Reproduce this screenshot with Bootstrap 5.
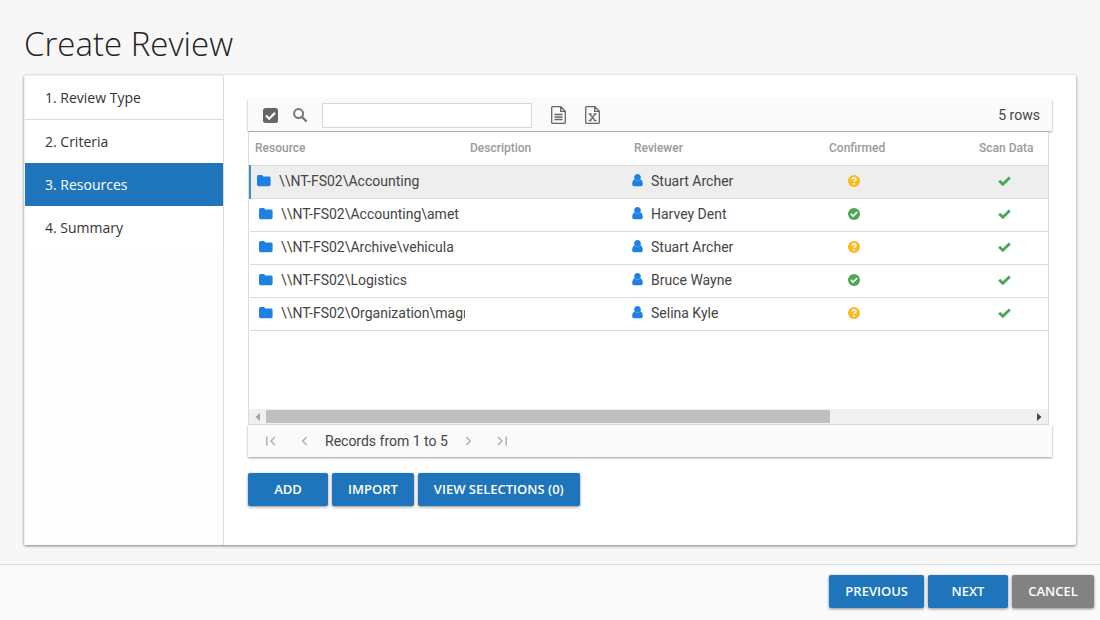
<!DOCTYPE html>
<html lang="en">
<head>
<meta charset="utf-8">
<meta name="viewport" content="width=device-width, initial-scale=1">
<title>Create Review</title>
<link href="https://cdn.jsdelivr.net/npm/bootstrap@5.3.0/dist/css/bootstrap.min.css" rel="stylesheet">
<style>
  :root { --brand: #1e75bb; --line: #dcdcdc; }
  body { background: #f7f7f7; color: #444; font: 14px/20px Roboto, "Liberation Sans", sans-serif; }
  .segoe { font-family: "Open Sans", "Noto Sans", sans-serif; }
  .page-title { font-size: 33px; line-height: 44px; font-weight: 350; color: #222; padding-top: 22px; margin-bottom: 9px; }
  .panel { background: #fff; border-radius: 2px; box-shadow: 0 1px 3px rgba(0,0,0,.5); margin-bottom: 19px; }
  .steps { width: 200px; background: #fdfdfd; border: 1px solid var(--line); border-width: 1px 1px 0 1px; border-top-color: #eee; border-left-color: #eee; }
  .steps .nav-link { height: 43px; padding: 0 20px; line-height: 43px; color: #333; font-size: 14px; border-radius: 0; background: #fff; box-sizing: content-box; }
  .steps .ruled { border-bottom: 1px solid var(--line); }
  .steps .nav-link.active { background: var(--brand); color: #fff; }
  .bar { background: #fafafa; height: 32px; box-shadow: 0 1px 2px rgba(0,0,0,.4); }
  .tools { gap: 15px; padding: 0 12px 0 15px; }
  .exports { gap: 19px; margin-left: 4px; }
  .pager { padding-left: 18px; gap: 26px; }
  .pager-text { margin: 0 -8px; }
  .icon-btn { border: 0; background: none; padding: 0; color: #666; line-height: 0; }
  .search { width: 210px; height: 25px; border: 1px solid #d8d8d8; border-radius: 0; padding: 0 6px; font-size: 14px; }
  .grid { height: 294px; margin-right: 3px; border: 1px solid var(--line); border-top-color: #aaa; background: #fff; }
  .grid table { table-layout: fixed; width: 100%; color: inherit; }
  .grid th { height: 33px; padding: 0 0 0 5px; font-size: 12px; font-weight: 500; color: #9a9a9a; }
  .grid td { height: 33px; padding: 0 0 2px 9px; overflow: hidden; white-space: nowrap; border-top: 1px solid var(--line); }
  .grid td:nth-child(3) { padding-left: 3px; }
  .grid td:nth-child(4), .grid td:nth-child(5) { padding-left: 24px; }
  .grid tbody tr:last-child td { border-bottom: 1px solid var(--line); }
  .grid tr.chosen td { background: #eee; }
  .grid tr.chosen td:first-child { border-left: 2px solid #3b93b5; padding-left: 6px; }
  .grid svg { display: inline-block; vertical-align: -1px; }
  .c-res { width: 215px; } .c-desc { width: 164px; } .c-rev { width: 195px; } .c-conf { width: 150px; }
  .blue { color: #1e80e2; } .green { color: #4aa855; } .amber { color: #fdb81e; }
  .scroller { height: 15px; background: #f0f0f0; }
  .thumb { height: 13px; background: #bfbfbf; }
  .scroller button { width: 17px; }
  .pager .icon-btn { color: #b4b4b4; }
  .act { background: var(--brand); color: #fff; border: 0; border-radius: 2px; font-size: 13px; line-height: 21px; padding: 6px 16px; font-weight: 600; min-width: 80px; box-shadow: 0 1px 3px rgba(0,0,0,.45); }
  .act:hover { background: #17639f; color: #fff; }
  .act.grey { background: #828282; min-width: 82px; }
  .foot { background: #fafafa; border-top: 1px solid var(--line); padding: 10px 6px 12px; }
</style>
</head>
<body class="d-flex flex-column min-vh-100">
<svg class="d-none" aria-hidden="true">
  <symbol id="folder" viewBox="0 0 14 12"><path fill="currentColor" d="M1.500 0h3.200Q6 0 6.200 1.600h6.100Q13.600 1.700 13.600 3v6.600Q13.600 11.200 12 11.200H1.600Q0 11.200 0 9.600V1.600Q0 0 1.500 0z"/></symbol>
  <symbol id="person" viewBox="0 0 11 13"><path fill="currentColor" d="M5.500 0a3.200 3.300 0 0 1 2.700 5.200Q10.800 6 10.800 10.200 10.800 12.300 9 12.300H2Q.2 12.300.2 10.200.2 6 2.800 5.200A3.200 3.300 0 0 1 5.500 0z"/><path d="M2.700 5.700q2.800 2.200 5.600 0" fill="none" stroke="#fff" stroke-opacity=".35" stroke-width=".7"/></symbol>
  <symbol id="ask" viewBox="0 0 12 12"><circle cx="6" cy="6" r="6" fill="currentColor"/><path d="M4.100 4.500C4.300 2.500 8 2.400 7.900 4.500 7.800 5.700 6.100 5.600 6.100 7.100" fill="none" stroke="#fff" stroke-width="1.700"/><path d="M5.200 8.100h1.700v1.600H5.200z" fill="#fff"/></symbol>
  <symbol id="okay" viewBox="0 0 12 12"><circle cx="6" cy="6" r="6" fill="currentColor"/><path d="M2.900 5.900l2.200 2.200 4-4" fill="none" stroke="#fff" stroke-width="1.800"/></symbol>
  <symbol id="tick" viewBox="0 0 13 12"><path d="M1.200 5.800l3.600 3.500 7-6.900" fill="none" stroke="currentColor" stroke-width="2.800"/></symbol>
</svg>

<main class="flex-grow-1 d-flex flex-column px-4">
  <h1 class="page-title segoe">Create Review</h1>
  <div class="panel d-flex flex-grow-1">
    <nav class="steps nav flex-column flex-nowrap flex-shrink-0 segoe" aria-label="Steps">
      <a class="nav-link ruled" href="#">1. Review Type</a>
      <a class="nav-link" href="#">2. Criteria</a>
      <a class="nav-link active" href="#" aria-current="step">3. Resources</a>
      <a class="nav-link" href="#">4. Summary</a>
    </nav>
    <section class="flex-grow-1 p-4">
      <div class="bar tools d-flex align-items-center">
        <button class="icon-btn" aria-label="Select all"><svg width="15" height="15" viewBox="0 0 15 15"><rect width="15" height="15" rx="2.500" fill="currentColor"/><path d="M3 7.500l3.200 3.200L12 4.900" fill="none" stroke="#fff" stroke-width="2.300"/></svg></button>
        <label class="icon-btn flex-shrink-0" for="q"><svg width="14" height="14" viewBox="0 0 14 14" fill="none" stroke="#777"><circle cx="5.600" cy="5.600" r="4.500" stroke-width="2"/><path d="M9 9l4 4" stroke-width="2.400" stroke-linecap="round"/></svg></label>
        <input id="q" class="search" type="text" aria-label="Search">
        <div class="exports d-flex">
          <button class="icon-btn" aria-label="Export text"><svg width="15" height="18" viewBox="0 0 15 18" fill="none" stroke="currentColor" stroke-width="1.300"><path d="M.7 1.500Q.7.700 1.500.7h8.300l4.500 4.500v11.300q0 .8-.8.800h-12q-.8 0-.8-.8zM9.700.9v4.400h4.400M3.500 8.500h8M3.500 11h8M3.500 13.500h8"/></svg></button>
          <button class="icon-btn" aria-label="Export to Excel"><svg width="15" height="18" viewBox="0 0 15 18" fill="none" stroke="currentColor" stroke-width="1.300"><path d="M.7 1.500Q.7.700 1.500.7h8.300l4.500 4.500v11.300q0 .8-.8.800h-12q-.8 0-.8-.8zM9.700.9v4.400h4.400M5 8.300l5 6.200M10 8.300l-5 6.200M3.700 8h2.800M8.700 8h2.800M3.700 14.600h2.800M8.700 14.600h2.800"/></svg></button>
        </div>
        <span class="ms-auto">5 rows</span>
      </div>
      <div class="grid d-flex flex-column">
        <table>
          <colgroup><col class="c-res"><col class="c-desc"><col class="c-rev"><col class="c-conf"><col></colgroup>
          <thead><tr><th>Resource</th><th>Description</th><th>Reviewer</th><th>Confirmed</th><th>Scan Data</th></tr></thead>
          <tbody>
            <tr class="chosen"><td><svg class="blue me-2" width="14" height="12"><use href="#folder"/></svg>\\NT-FS02\Accounting</td><td></td><td><svg class="blue me-2" width="11" height="13"><use href="#person"/></svg>Stuart Archer</td><td><svg class="amber" width="12" height="12" role="img" aria-label="Unconfirmed"><use href="#ask"/></svg></td><td><svg class="green" width="13" height="12" role="img" aria-label="Yes"><use href="#tick"/></svg></td></tr>
            <tr><td><svg class="blue me-2" width="14" height="12"><use href="#folder"/></svg>\\NT-FS02\Accounting\amet</td><td></td><td><svg class="blue me-2" width="11" height="13"><use href="#person"/></svg>Harvey Dent</td><td><svg class="green" width="12" height="12" role="img" aria-label="Confirmed"><use href="#okay"/></svg></td><td><svg class="green" width="13" height="12" role="img" aria-label="Yes"><use href="#tick"/></svg></td></tr>
            <tr><td><svg class="blue me-2" width="14" height="12"><use href="#folder"/></svg>\\NT-FS02\Archive\vehicula</td><td></td><td><svg class="blue me-2" width="11" height="13"><use href="#person"/></svg>Stuart Archer</td><td><svg class="amber" width="12" height="12" role="img" aria-label="Unconfirmed"><use href="#ask"/></svg></td><td><svg class="green" width="13" height="12" role="img" aria-label="Yes"><use href="#tick"/></svg></td></tr>
            <tr><td><svg class="blue me-2" width="14" height="12"><use href="#folder"/></svg>\\NT-FS02\Logistics</td><td></td><td><svg class="blue me-2" width="11" height="13"><use href="#person"/></svg>Bruce Wayne</td><td><svg class="green" width="12" height="12" role="img" aria-label="Confirmed"><use href="#okay"/></svg></td><td><svg class="green" width="13" height="12" role="img" aria-label="Yes"><use href="#tick"/></svg></td></tr>
            <tr><td><svg class="blue me-2" width="14" height="12"><use href="#folder"/></svg>\\NT-FS02\Organization\magn</td><td></td><td><svg class="blue me-2" width="11" height="13"><use href="#person"/></svg>Selina Kyle</td><td><svg class="amber" width="12" height="12" role="img" aria-label="Unconfirmed"><use href="#ask"/></svg></td><td><svg class="green" width="13" height="12" role="img" aria-label="Yes"><use href="#tick"/></svg></td></tr>
          </tbody>
        </table>
        <div class="scroller d-flex align-items-center mt-auto">
          <button class="icon-btn" aria-label="Scroll left"><svg width="5" height="8" viewBox="0 0 5 8"><path d="M5 0v8L.5 4z" fill="#a3a3a3"/></svg></button>
          <div class="flex-grow-1"><div class="thumb" style="width:73.700%"></div></div>
          <button class="icon-btn" aria-label="Scroll right"><svg width="5" height="8" viewBox="0 0 5 8"><path d="M0 0v8l4.500-4z" fill="#444"/></svg></button>
        </div>
      </div>
      <div class="bar pager d-flex align-items-center">
        <button class="icon-btn" aria-label="First page"><svg width="10" height="10" viewBox="0 0 10 10" fill="none" stroke="currentColor" stroke-width="1.600"><path d="M.8.500v9M9 1L5 5l4 4"/></svg></button>
        <button class="icon-btn" aria-label="Previous page"><svg width="5" height="10" viewBox="0 0 5 10" fill="none" stroke="currentColor" stroke-width="1.600"><path d="M4.700 1l-4 4 4 4"/></svg></button>
        <span class="pager-text">Records from 1 to 5</span>
        <button class="icon-btn" aria-label="Next page"><svg width="5" height="10" viewBox="0 0 5 10" fill="none" stroke="currentColor" stroke-width="1.600"><path d="M.3 1l4 4-4 4"/></svg></button>
        <button class="icon-btn" aria-label="Last page"><svg width="10" height="10" viewBox="0 0 10 10" fill="none" stroke="currentColor" stroke-width="1.600"><path d="M9.200.500v9M1 1l4 4-4 4"/></svg></button>
      </div>
      <div class="d-flex gap-1 mt-3 segoe">
        <button class="btn act">ADD</button>
        <button class="btn act">IMPORT</button>
        <button class="btn act">VIEW SELECTIONS (0)</button>
      </div>
    </section>
  </div>
</main>
<footer class="foot d-flex justify-content-end gap-1 segoe">
  <button class="btn act">PREVIOUS</button>
  <button class="btn act">NEXT</button>
  <button class="btn act grey">CANCEL</button>
</footer>
<script src="https://cdn.jsdelivr.net/npm/bootstrap@5.3.0/dist/js/bootstrap.bundle.min.js"></script>
</body>
</html>
